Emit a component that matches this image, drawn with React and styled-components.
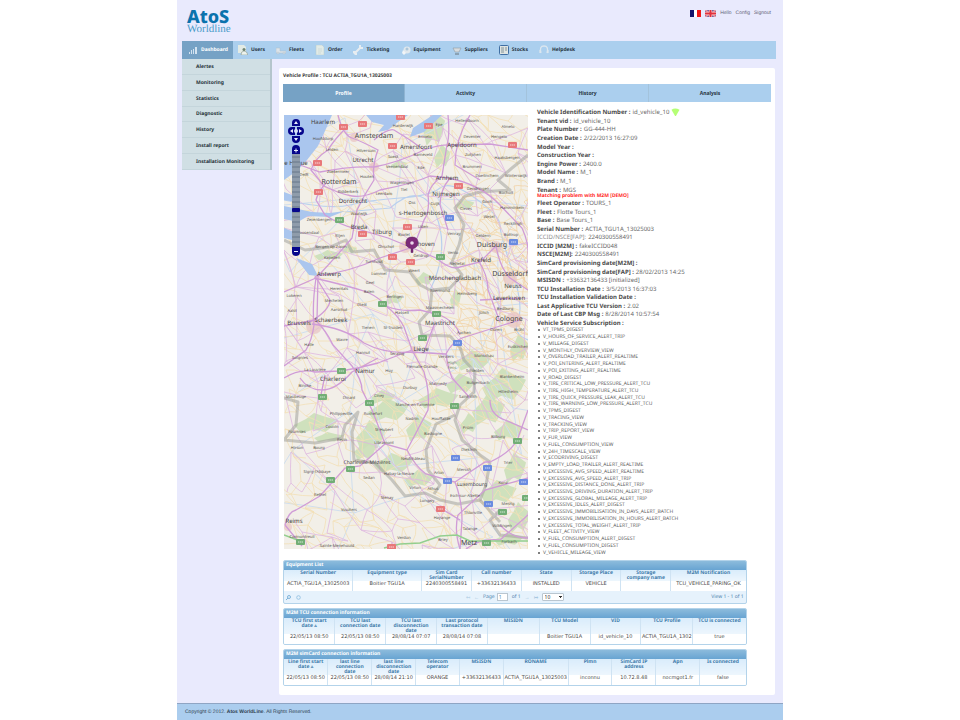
import React from 'react';
import styled, { createGlobalStyle } from 'styled-components';

const GlobalStyle = createGlobalStyle`
  *, *::before, *::after { box-sizing: border-box; }
  body {
    margin: 0;
    background: #ffffff;
    color: #4a4a4a;
    font-family: "Noto Sans", "Open Sans", sans-serif;
    font-size: 5px;
    line-height: 6px;
    text-rendering: geometricPrecision;
  }
  button, input, select { font: inherit; color: inherit; }
  a { color: inherit; text-decoration: none; }
  ul, dl, dd, p, h1, h2 { margin: 0; padding: 0; }
`;

const Page = styled.div`
  max-width: 606px;
  min-height: 100vh;
  margin: 0 auto;
  background: #e9eafd;
  display: flex;
  flex-direction: column;
`;

const Header = styled.header`
  height: 41px;
  padding: 8px 12px 0 10px;
  display: flex;
  justify-content: space-between;
  align-items: flex-start;
`;

const Logo = styled.a`
  display: grid;
  grid-template-rows: 16px 11px;
`;

const LogoName = styled.span`
  font-weight: 800;
  font-size: 18px;
  line-height: 18px;
  color: #0b72ad;
`;

const LogoSub = styled.span`
  font-family: "Liberation Serif", serif;
  font-size: 11px;
  line-height: 11px;
  color: #4b9cc9;
`;

const Tools = styled.div`
  display: flex;
  align-items: center;
  gap: 4px;
  height: 10px;
  svg { display: block; }
`;

const ToolLink = styled.a`
  font-family: "Liberation Sans", sans-serif;
  color: #66667a;
`;

const NavBar = styled.nav`
  margin: 0 7px 0 5px;
  height: 18px;
  background: #abcfee;
  display: flex;
`;

const NavItem = styled.a`
  display: flex;
  align-items: center;
  gap: 3px;
  padding: 0 ${(p) => (p.$active ? '5px' : '6px')} 0 ${(p) => (p.$active ? '6px' : '5px')};
  font-weight: 700;
  color: ${(p) => (p.$active ? '#ffffff' : '#26333f')};
  background: ${(p) => (p.$active ? '#76a2c5' : 'transparent')};
  svg { display: block; flex: none; }
`;

const Body = styled.div`
  flex: 1;
  display: flex;
  align-items: flex-start;
  gap: 7px;
  padding: 0 8px 8px 5px;
`;

const SideMenu = styled.nav`
  flex: 0 0 90px;
  min-height: 111px;
  display: grid;
  grid-auto-rows: 1fr;
  background: #d0dfe4;
  border-right: 2px solid #b4c5cc;
`;

const SideLink = styled.a`
  display: flex;
  align-items: center;
  padding: 1px 0 0 14px;
  font-weight: 700;
  color: #26333a;
  border-bottom: 1px solid #c4d5db;
`;

const Panel = styled.main`
  flex: 1;
  min-width: 0;
  margin-top: 9px;
  padding: 4px 4px 9px;
  background: #ffffff;
  border-radius: 2px;
`;

const PanelTitle = styled.h1`
  font-size: 5px;
  line-height: 9px;
  font-weight: 700;
  color: #3c3c3c;
`;

const Tabs = styled.div`
  margin-top: 3px;
  height: 18px;
  display: grid;
  grid-template-columns: repeat(4, 1fr);
`;

const Tab = styled.button`
  border: 0;
  border-right: 1px solid ${(p) => (p.$active ? '#8fb4d2' : '#a3c3dc')};
  padding: 0;
  font-weight: 700;
  background: ${(p) => (p.$active ? '#76a2c5' : '#abcfee')};
  color: ${(p) => (p.$active ? '#ffffff' : '#26333f')};
  &:last-child { border-right: 0; }
`;

const Columns = styled.div`
  display: grid;
  grid-template-columns: 244fr 234fr;
  gap: 9px;
  padding-left: 1px;
`;

const MapArea = styled.section`
  padding-top: 13px;
  svg { display: block; width: 100%; height: auto; }
`;

const Info = styled.section`
  padding-top: 6px;
`;

const Facts = styled.dl`
  display: grid;
  grid-auto-rows: 1fr;
  min-height: ${(p) => p.$height};
  font-size: 6px;
  line-height: 8px;
`;

const Fact = styled.div`
  display: flex;
  align-items: center;
  gap: 2px;
  white-space: nowrap;
  dt { font-weight: ${(p) => (p.$plain ? 400 : 700)}; color: ${(p) => (p.$plain ? '#8d8d8d' : '#4a4a4a')}; }
  dd { color: #686868; }
  svg { display: block; }
`;

const Warning = styled.p`
  height: 5px;
  line-height: 5px;
  font-weight: 700;
  color: #ff2a2a;
`;

const Services = styled.ul`
  min-height: 229px;
  display: grid;
  grid-auto-rows: 1fr;
  list-style: none;
  color: #5d5d5d;
`;

const Service = styled.li`
  display: flex;
  align-items: center;
  gap: 3px;
  padding-left: 1px;
  white-space: nowrap;
  &::before {
    content: '';
    width: 2px;
    height: 2px;
    border-radius: 1px;
    background: #555555;
  }
`;

const Grids = styled.div`
  width: 95%;
  margin-top: 4px;
  display: grid;
  gap: 4px;
`;

const GridBox = styled.section`
  border: 1px solid #b3d3ea;
  border-radius: 2px;
  overflow: hidden;
  background: #e6f2fc;
`;

const GridTitle = styled.h2`
  height: 9px;
  padding-left: 2px;
  font-size: 5px;
  line-height: 9px;
  font-weight: 700;
  color: #ffffff;
  background: linear-gradient(#8cbbdc, #68a4d2);
`;

const DataTable = styled.table`
  width: 100%;
  table-layout: fixed;
  border-collapse: collapse;
  th, td {
    text-align: center;
    vertical-align: top;
    border-right: 1px solid #cfe3f3;
  }
  th:last-child, td:last-child { border-right: 0; }
  th {
    height: ${(p) => p.$head};
    padding: 1px 3px 0;
    line-height: 5px;
    font-weight: 700;
    color: #3f7cab;
    background: linear-gradient(#d9ecfb, #edf6fd);
  }
  td {
    height: 10px;
    padding: 0;
    line-height: 6px;
    overflow: hidden;
    font-family: "DejaVu Sans", sans-serif;
    white-space: nowrap;
    color: #4a4a4a;
    background: #ffffff;
  }
`;

const Pager = styled.div`
  height: 12px;
  padding: 0 2px;
  display: grid;
  grid-template-columns: 1fr auto 1fr;
  align-items: center;
  color: #4f84ad;
`;

const PagerIcons = styled.div`
  display: flex;
  gap: 5px;
  svg { display: block; }
`;

const PagerMiddle = styled.div`
  display: flex;
  align-items: center;
  gap: 4px;
  white-space: nowrap;
`;

const PageInput = styled.input`
  width: 11px;
  height: 8px;
  padding: 0 1px;
  border: 1px solid #b9c6d0;
  background: #ffffff;
`;

const PageLabel = styled.label`
  display: flex;
  align-items: center;
  gap: 2px;
`;

const RowSelect = styled.select`
  appearance: none;
  width: 22px;
  height: 8px;
  padding: 0 2px;
  border: 1px solid #b9c6d0;
  border-radius: 1px;
  line-height: 6px;
  color: #333333;
  background:
    linear-gradient(#333333, #333333) 16px 2px / 3px 1px no-repeat,
    linear-gradient(#333333, #333333) 17px 3px / 1px 1px no-repeat,
    #ffffff;
`;

const PagerCount = styled.span`
  text-align: right;
`;

const PagerStep = styled.button`
  border: 0;
  padding: 0;
  background: none;
  color: #a9c8e0;
`;

const Footer = styled.footer`
  height: 17px;
  padding: 0 8px;
  border-top: 1px solid #8fa5c4;
  background: #abcdee;
  font-family: "Liberation Sans", sans-serif;
  line-height: 16px;
  color: #2f3f50;
`;

const NAV = [
  ['Dashboard', 'bars'], ['Users', 'users'], ['Fleets', 'truck'], ['Order', 'page'], ['Ticketing', 'tools'],
  ['Equipment', 'gear'], ['Suppliers', 'cart'], ['Stocks', 'stocks'], ['Helpdesk', 'headset'],
];

function NavIcon({ kind }) {
  const drawings = {
    bars: <g fill="#d3e3f0"><path d="M1 7h1v2H1zM3 5h1v4H3zM5 4h1v5H5zM7 2h2v7H7z" /></g>,
    users: <g><path d="M0 0h6l2 2v6H0z" fill="#e3ebe5" /><circle cx="6" cy="4.500" r="1.500" fill="#6e8272" /><path d="M3 10q0-4 3-4t4 4z" fill="#edf3ee" stroke="#71857a" strokeWidth=".5" /></g>,
    truck: <g fill="#dce4ea" stroke="#aebdc9" strokeWidth=".5"><path d="M0 3h4v3h6v2H0z" /><circle cx="2" cy="8" r="1" /><circle cx="8" cy="8" r="1" /></g>,
    page: <g><path d="M1 0h6l2 2v8H1z" fill="#e2ebe7" stroke="#b7c8cb" strokeWidth=".5" /><path d="M3 4h4M3 6h4M3 8h3" stroke="#c2d0d2" strokeWidth=".6" /></g>,
    tools: <path d="M1 9L5 5L8 2M7 0v3h3M0 7h3v3" stroke="#e7edf1" strokeWidth="2" fill="none" />,
    gear: <g><circle cx="6" cy="5" r="3.500" fill="#e0e8ed" /><circle cx="6" cy="4" r="1.500" fill="#abc6da" /><path d="M2 5l3 3-2 2-2-2z" fill="#f2f5f7" /></g>,
    cart: <g><path d="M1 3h8L7 7H3z" fill="#d7dcdf" stroke="#8f9aa3" strokeWidth=".6" /><path d="M3 9h4" stroke="#6b747b" /></g>,
    stocks: <g><rect x=".5" y=".5" width="9" height="9" rx="1" fill="#dfe4e2" stroke="#3f6ea3" /><path d="M2 3h3M2 5h3M2 7h3M6 3h2M6 5h2" stroke="#6a7d88" strokeWidth=".8" /></g>,
    headset: <path d="M2 8Q0 1 5 1t3 7M1 5v3M9 5v3" stroke="#dbe6ef" strokeWidth="1.300" fill="none" />,
  };
  return <svg width="10" height="10" viewBox="0 0 10 10" aria-hidden="true">{drawings[kind]}</svg>;
}

const FACTS_TOP = [
  ['Vehicle Identification Number :', 'id_vehicle_10', 'gem'], ['Tenant vid :', 'id_vehicle_10'],
  ['Plate Number :', 'GG-444-HH'], ['Creation Date :', '2/22/2013 16:27:09'], ['Model Year :', ''],
  ['Construction Year :', ''], ['Engine Power :', '2400.0'], ['Model Name :', 'M_1'], ['Brand :', 'M_1'], ['Tenant :', 'MGS'],
];

const FACTS_BOTTOM = [
  ['Fleet Operator :', 'TOURS_1'], ['Fleet :', 'Flotte Tours_1'], ['Base :', 'Base Tours_1'],
  ['Serial Number :', 'ACTIA_TGU1A_13025003'], ['ICCID/NSCE[FAP]:', '2240300558491', 'plain'],
  ['ICCID [M2M] :', 'fakeICCID048'], ['NSCE[M2M]:', '2240300558491'], ['SimCard provisioning date[M2M] :', ''],
  ['SimCard provisioning date[FAP] :', '28/02/2013 14:25'], ['MSISDN :', '+33632136433 [initialized]'],
  ['TCU Installation Date :', '3/5/2013 16:37:03'], ['TCU Installation Validation Date :', ''],
  ['Last Applicative TCU Version :', '2.02'], ['Date of Last CBP Msg :', '8/28/2014 10:57:54'],
  ['Vehicle Service Subscription :', ''],
];

const SERVICES = `VT_TPMS_DIGEST V_HOURS_OF_SERVICE_ALERT_TRIP V_MILEAGE_DIGEST V_MONTHLY_OVERVIEW_VIEW
V_OVERLOAD_TRAILER_ALERT_REALTIME V_POI_ENTERING_ALERT_REALTIME V_POI_EXITING_ALERT_REALTIME V_ROAD_DIGEST
V_TIRE_CRITICAL_LOW_PRESSURE_ALERT_TCU V_TIRE_HIGH_TEMPERATURE_ALERT_TCU V_TIRE_QUICK_PRESSURE_LEAK_ALERT_TCU
V_TIRE_WARNING_LOW_PRESSURE_ALERT_TCU V_TPMS_DIGEST V_TRACING_VIEW V_TRACKING_VIEW V_TRIP_REPORT_VIEW V_FUR_VIEW
V_FUEL_CONSUMPTION_VIEW V_24H_TIMESCALE_VIEW V_ECODRIVING_DIGEST V_EMPTY_LOAD_TRAILER_ALERT_REALTIME
V_EXCESSIVE_AVG_SPEED_ALERT_REALTIME V_EXCESSIVE_AVG_SPEED_ALERT_TRIP V_EXCESSIVE_DISTANCE_DONE_ALERT_TRIP
V_EXCESSIVE_DRIVING_DURATION_ALERT_TRIP V_EXCESSIVE_GLOBAL_MILEAGE_ALERT_TRIP V_EXCESSIVE_IDLES_ALERT_DIGEST
V_EXCESSIVE_IMMOBILISATION_IN_DAYS_ALERT_BATCH V_EXCESSIVE_IMMOBILISATION_IN_HOURS_ALERT_BATCH
V_EXCESSIVE_TOTAL_WEIGHT_ALERT_TRIP V_FLEET_ACTIVITY_VIEW V_FUEL_CONSUMPTION_ALERT_DIGEST
V_FUEL_CONSUMPTION_DIGEST V_VEHICLE_MILEAGE_VIEW`.split(/\s+/);

const EQUIPMENT = {
  title: 'Equipment List',
  head: '11px',
  widths: [69, 69, 50, 50, 50, 50, 50, 75],
  columns: ['Serial Number', 'Equipment type', 'Sim Card SerialNumber', 'Call number', 'State', 'Storage Place', 'Storage company\u00a0name', 'M2M Notification'],
  row: ['ACTIA_TGU1A_13025003', 'Boitier TGU1A', '2240300558491', '+33632136433', 'INSTALLED', 'VEHICLE', '', 'TCU_VEHICLE_PARING_OK'],
};
const TCU = {
  title: 'M2M TCU connection information',
  head: '16px',
  widths: [51, 51, 51, 51, 52, 51, 51, 52, 53],
  columns: ['TCU first start date\u00a0▵', 'TCU last connection\u00a0date', 'TCU last disconnection date', 'Last protocol transaction\u00a0date', 'MISIDN', 'TCU Model', 'VID', 'TCU Profile', 'TCU\u00a0is\u00a0connected'],
  row: ['22/05/13 08:50', '22/05/13 08:50', '28/08/14 07:07', '28/08/14 07:08', '', 'Boitier TGU1A', 'id_vehicle_10', 'ACTIA_TGU1A_1302', 'true'],
};
const SIM = {
  title: 'M2M simCard connection information',
  head: '16px',
  widths: [44, 44, 44, 44, 44, 65, 44, 44, 44, 46],
  columns: ['Line\u00a0first\u00a0start date\u00a0▵', 'last line connection date', 'last line disconnection date', 'Telecom operator', 'MSISDN', 'RONAME', 'Plmn', 'SimCard IP address', 'Apn', 'Is connected'],
  row: ['22/05/13 08:50', '22/05/13 08:50', '28/08/14 21:10', 'ORANGE', '+33632136433', 'ACTIA_TGU1A_13025003', 'inconnu', '10.72.8.48', 'nocmgot1.fr', 'false'],
};

function InfoGrid({ data, children }) {
  const total = data.widths.reduce((a, b) => a + b, 0);
  return (
    <GridBox>
      <GridTitle>{data.title}</GridTitle>
      <DataTable $head={data.head} aria-label={data.title}>
        <colgroup>{data.widths.map((w, i) => <col key={i} width={`${(w / total) * 100}%`} />)}</colgroup>
        <thead><tr>{data.columns.map((c) => <th key={c} scope="col">{c}</th>)}</tr></thead>
        <tbody><tr>{data.row.map((c, i) => <td key={i}>{c}</td>)}</tr></tbody>
      </DataTable>
      {children}
    </GridBox>
  );
}

const PLACES = [
  ['Amsterdam', 374, 138, 7], ['Rotterdam', 339, 184, 7], ['Brussels', 299, 325, 6], ['Duisburg', 492, 247, 7],
  ['Düsseldorf', 510, 276, 7], ['Cologne', 509, 321, 7], ['Utrecht', 363, 162, 6], ['Haarlem', 323, 124, 6],
  ['Amersfoort', 416, 149, 6], ['Apeldoorn', 462, 147, 6], ['e Hague', 296, 165, 6], ['Arnhem', 447, 180, 6],
  ['Nijmegen', 446, 196, 6], ['Dordrecht', 353, 203, 6], ['s-Hertogenbosch', 423, 215, 6], ['Breda', 359, 229, 6],
  ['Tilburg', 382, 234, 6], ['Eindhoven', 420, 246, 6], ['Antwerp', 329, 276, 6], ['Schaerbeek', 331, 322, 6],
  ['Mönchengladbach', 455, 280, 6], ['Krefeld', 481, 262, 6], ['Neuss', 513, 288, 6], ['Leverkusen', 509, 300, 6],
  ['Maastricht', 440, 325, 6], ['Liège', 421, 351, 6], ['Charleroi', 333, 381, 6], ['Namur', 365, 373, 6],
  ['Reims', 294, 523, 6], ['Metz', 469, 545, 7], ['Charleville-Mézières', 367, 464, 5], ['Luxembourg', 472, 486, 5],
  ['Hoofddorp', 323, 140], ['Harderwijk', 403, 127], ['Epe', 439, 126], ['Hellendoorn', 467, 122], ['Almelo', 508, 128],
  ['Ermelo', 425, 138], ['Deventer', 472, 138], ['Hengelo', 499, 138], ['Leiden', 332, 151], ['Hilversum', 366, 152],
  ['Soest', 393, 158], ['Barneveld', 423, 156], ['Zutphen', 473, 156], ['Haaksbergen', 507, 159], ['Zoetermeer', 338, 173],
  ['Veenendaal', 397, 168], ['Ede', 421, 169], ['Brummen', 472, 168], ['Delft', 304, 176], ['Houten', 367, 178],
  ['Wageningen', 402, 184], ['Doetinchem', 487, 177], ['Winterswijk', 516, 177], ['Ridderkerk', 348, 193], ['Leerdam', 384, 195],
  ['Tiel', 404, 191], ['Gendringen', 478, 190], ['Bocholt', 506, 194], ['Oss', 412, 204], ['Cuijk', 435, 205],
  ['Goch', 487, 203], ['Cleves', 466, 210], ['Waalwijk', 359, 215], ['Zevenbergen', 319, 221], ['Uden', 423, 228],
  ['Wesel', 489, 218], ['Hamminkeln', 512, 209], ['Roosendaal', 308, 234], ['Rijen', 340, 237], ['Boxtel', 404, 236],
  ['Bergen op Zoom', 331, 248], ['Geldern', 483, 237], ['Bottrop', 511, 236], ['Venray', 454, 235], ['Recklingh', 513, 225],
  ['Oirschot', 386, 248], ['Kapellen', 332, 259], ['Turnhout', 374, 263], ['Lommel', 379, 275], ['Geel', 370, 284],
  ['Herentals', 339, 290], ['Balen', 369, 293], ['Geldrop', 421, 257], ['Weert', 414, 272], ['Venlo', 453, 254],
  ['Nettetal', 457, 265], ['Mechelen', 334, 302], ['Beringen', 395, 298], ['Diest', 362, 306], ['Aarschot', 339, 311],
  ['Hasselt', 402, 314], ['Roermond', 440, 292], ['Heinsberg', 467, 295], ['Aalst', 292, 312], ['Lokeren', 294, 297],
  ['Maasmechelen', 440, 309], ['Jülich', 484, 314], ['Bedburg', 505, 310], ['Tienen', 368, 329], ['St-Truiden', 393, 329],
  ['Aachen', 464, 334], ['Düren', 496, 331], ['Brühl', 519, 331], ['Wavre', 342, 341], ['Halle', 309, 346],
  ['Hannut', 363, 354], ['Seraing', 397, 355], ['Verviers', 446, 358], ['Flémalle-Grande', 422, 368], ['Soignies', 300, 359],
  ['Huy', 389, 372], ['La Louvière', 315, 371], ['Monschau', 484, 357], ['Euskirchen', 518, 348], ['Schleiden', 475, 372],
  ['Blankenheim', 512, 378], ['Hillesheim', 508, 393], ['Malmedy', 438, 385], ['Butgenbach', 478, 384], ['Durbuy', 410, 389],
  ['Binche', 305, 387], ['Maubeuge', 296, 398], ['Ciney', 379, 397], ['Dinant', 349, 399], ['Saint-Vith', 468, 398],
  ['Marche-en-Famenne', 415, 406], ['Philippeville', 341, 415], ['Rochefort', 373, 415], ['Nadrin', 412, 420],
  ['Houffalize', 441, 420], ['St-Hubert', 384, 431], ['Bastogne', 433, 435], ['Libramont', 384, 444], ['Prüm', 468, 429],
  ['Bitburg', 498, 438], ['Fourmies', 297, 433], ['Couvin', 332, 428], ['Hirson', 297, 449], ['Bourg', 319, 449],
  ['Revin', 342, 441], ['Neufchâteau', 413, 460], ['Diekirch', 469, 451], ['Trier', 508, 464], ['Signy-l’Abbaye', 317, 473],
  ['Sedan', 369, 479], ['Habay-la-Neuve', 399, 475], ['Arlon', 439, 474], ['Mersch', 464, 471], ['Virton', 415, 489],
  ['Athus', 433, 490], ['Konz', 503, 484], ['Rethel', 320, 496], ['Stenay', 387, 499], ['Longwy', 427, 502],
  ['Esch-sur-Alzette', 465, 497], ['Vouziers', 349, 511], ['Merzig', 508, 505], ['Thionville', 473, 514],
  ['Hayange', 442, 519], ['Völklingen', 502, 527], ['Talange', 470, 530], ['Briey', 443, 541], ['Verdun', 404, 539],
  ['Cormontreuil', 302, 538], ['Forbach', 509, 543], ['Sainte-Menehould', 337, 547],
];

const SHIELDS = [
  ['r', 343, 127], ['r', 362, 124], ['r', 400, 117], ['r', 428, 126], ['r', 392, 146], ['r', 317, 163], ['r', 512, 145],
  ['r', 458, 186], ['r', 318, 192], ['g', 339, 220], ['r', 407, 227], ['r', 362, 234], ['b', 449, 218], ['b', 513, 242],
  ['r', 392, 257], ['r', 410, 262], ['g', 440, 257], ['g', 382, 304], ['g', 436, 314], ['g', 422, 338], ['b', 457, 343],
  ['g', 341, 371], ['g', 322, 397], ['g', 369, 403], ['g', 454, 406], ['g', 517, 441], ['b', 455, 458], ['g', 350, 469],
  ['b', 487, 468], ['g', 330, 480], ['b', 447, 481], ['b', 523, 482], ['g', 526, 498], ['b', 488, 504], ['r', 440, 509],
  ['g', 502, 512], ['g', 300, 542], ['r', 391, 547], ['g', 486, 543],
];
const SHIELD_COLORS = { r: '#e8787a', g: '#72ae76', b: '#6a8be0' };

const HIGHWAYS = [
  'M338 115Q343 135 352 138T378 150Q372 165 374 180Q364 195 357 210L352 238Q335 258 318 276L317 320',
  'M344 130Q334 140 328 150Q315 158 311 170L324 186Q340 194 352 196T380 190Q412 184 430 176L448 178Q480 184 500 205L522 228Q530 245 528 262',
  'M326 183Q318 192 316 200L325 215Q342 226 354 228L388 238L410 247L436 258Q448 268 456 268L480 262L496 246',
  'M300 165L320 172Q350 166 374 167Q400 162 424 150Q440 144 454 145L490 144L528 150',
  'M374 140Q388 128 394 130L410 140L424 150M448 115Q450 135 447 145L442 176Q430 185 428 195Q430 212 424 220L414 246',
  'M314 278Q345 285 367 292Q380 298 386 306Q398 315 404 327L412 350L424 372Q430 392 428 410L407 450',
  'M312 324Q345 328 364 343Q385 354 410 352L446 354Q452 342 462 338L500 326L520 320',
  'M284 326L315 320Q326 330 333 345L352 366Q362 380 362 390L372 410Q380 430 385 444L407 450Q415 466 426 474L455 482Q462 500 462 520L460 549',
  'M316 276Q350 272 380 258L410 248M284 292L316 278Q312 305 314 325Q312 340 306 350L284 366M310 322Q330 310 330 300L315 276',
  'M386 306Q400 312 420 310L440 315Q456 322 460 335M434 325L424 352M478 260Q488 275 488 290L500 322M496 246Q500 268 510 278L528 290M480 300L520 298',
  'M284 378Q300 368 315 372L341 371Q360 368 378 363L412 350M325 375L320 400M300 378Q308 390 322 390T352 372L378 358',
  'M446 354Q448 368 452 378L470 398M490 400Q490 415 505 420L528 430M470 115Q455 140 455 165L480 180M450 178Q440 190 440 205L448 230',
  'M320 496Q336 478 345 468L360 466L385 444M285 525Q288 512 296 510L320 496M285 525L302 546M490 462Q512 452 518 438L528 410M455 482L485 462L490 462',
  'M460 549Q454 530 458 515L485 490L528 478M442 509L460 520M500 525Q512 538 528 538M466 549Q480 538 500 540L528 515',
];

const BORDERS = [
  'M528 155L512 168L498 180L510 190L480 192L465 196L455 208L464 225L459 245L452 262L462 275L450 288L432 290L430 310L419 322L422 335L450 336L460 347L464 360L475 372L474 392L460 405L455 420L462 440L480 455L490 462',
  'M284 240L305 250L330 247L346 240L352 252L374 250L385 270L410 272L420 285L430 290',
  'M284 398L298 402L296 425L284 440L315 443L342 438L345 425L358 412L352 432L354 460L375 463L392 480L405 496L425 493L440 500L458 504L480 500L486 485L490 462',
  'M455 415L436 424L426 450L428 470L440 485L434 494M500 510L490 520L500 535L528 538M480 500L500 522',
];

const FORESTS = [
  [435, 130, 12, 22], [443, 158, 9, 14], [400, 165, 9, 5], [466, 205, 10, 6], [330, 256, 16, 6], [350, 250, 8, 5],
  [425, 280, 10, 8], [456, 300, 6, 12], [395, 300, 9, 6], [475, 362, 20, 12], [506, 388, 24, 20], [462, 385, 16, 12],
  [440, 400, 22, 12], [390, 412, 22, 14], [420, 430, 14, 16], [372, 438, 16, 18], [395, 465, 22, 12], [420, 480, 16, 10],
  [366, 452, 12, 12], [318, 425, 24, 12], [330, 438, 16, 6], [490, 412, 18, 18], [510, 432, 16, 12], [470, 425, 10, 12],
  [500, 494, 20, 14], [516, 470, 12, 18], [520, 520, 12, 18], [510, 540, 16, 8], [384, 398, 14, 8], [520, 350, 10, 16],
];

function makeRoads(seed, step, left, top, right, bottom) {
  let s = seed;
  const rand = () => {
    s = (s * 16807) % 2147483647;
    return s / 2147483647;
  };
  const nodes = [];
  for (let y = top; y <= bottom + step; y += step) {
    const line = [];
    for (let x = left; x <= right + step; x += step) {
      line.push([Math.round(x + (rand() - 0.5) * step), Math.round(y + (rand() - 0.5) * step)]);
    }
    nodes.push(line);
  }
  let d = '';
  nodes.forEach((line, r) => line.forEach(([x, y], c) => {
    [[0, 1], [1, 0], [1, 1]].forEach(([dr, dc]) => {
      const next = nodes[r + dr] && nodes[r + dr][c + dc];
      if (next && rand() > 0.42) {
        const mx = Math.round((x + next[0]) / 2 + (rand() - 0.5) * 6);
        const my = Math.round((y + next[1]) / 2 + (rand() - 0.5) * 6);
        d += `M${x} ${y}Q${mx} ${my} ${next[0]} ${next[1]}`;
      }
    });
  }));
  return d;
}

const LANES = makeRoads(73, 13, 284, 115, 528, 549);
const LANES_DENSE = makeRoads(31, 10, 460, 190, 528, 350);
const LOCAL = makeRoads(991, 24, 284, 115, 528, 549);
const STREAMS = makeRoads(4241, 60, 284, 140, 528, 549);

function RouteMap() {
  return (
    <svg viewBox="284 115 244 434" role="img" aria-label="Map" fontFamily="Noto Sans, sans-serif">
      <rect x="284" y="115" width="244" height="434" fill="#f2efe8" />
      {FORESTS.map(([x, y, a, b], i) => (
        <path key={i} fill="#cbdfb8" opacity=".9" d={`M${x - a} ${y}l${a / 2}-${b / 2} ${a / 3}-${b / 2} ${a / 2} ${b / 3} ${a / 2} ${b / 4}-${a / 5} ${b / 2}-${a / 3} ${b / 2}-${a / 2}-${b / 5}-${a / 2} ${b / 3}z`} />
      ))}
      <path d={STREAMS} fill="none" stroke="#cfdeee" strokeWidth="1" />
      <path d="M284 200Q330 210 350 205T400 198T440 188T475 198T500 225T512 270T518 320T528 340M430 290Q450 250 436 215T390 208L345 212" fill="none" stroke="#b9d0ee" strokeWidth="1.200" />
      <path d={LANES} fill="none" stroke="#f3dfb6" strokeWidth=".8" />
      <path d={LANES_DENSE} fill="none" stroke="#f1d2a6" strokeWidth=".8" />
      <path d={LOCAL} fill="none" stroke="#deb8e0" strokeWidth=".8" />
      <g fill="#aac6ee">
        <path d="M284 115H332L325 131L318 146L307 160L298 170L284 180Z" />
        <path d="M366 115H408L398 122L388 130L378 132L384 125L372 122Z M413 128L433 115H442L424 132L410 137Z" />
        <path d="M284 192L300 198L296 202L284 200ZM284 206L312 212L330 213L345 211L330 217L308 216L298 222L284 219ZM284 228L294 232L300 242L284 238ZM296 258L312 264L318 276L309 275L302 266Z" />
      </g>
      <g fill="#e9c4c2" opacity=".7">
        <circle cx="314" cy="326" r="8" /><circle cx="510" cy="278" r="7" /><circle cx="514" cy="320" r="8" />
        <circle cx="405" cy="247" r="6" /><circle cx="374" cy="167" r="5" /><circle cx="496" cy="247" r="6" />
        <circle cx="414" cy="350" r="4" /><circle cx="354" cy="138" r="4" /><circle cx="288" cy="527" r="4" />
      </g>
      {BORDERS.map((d) => <path key={d} d={d} fill="none" stroke="#a3a39d" strokeWidth="3" strokeLinejoin="round" opacity=".55" />)}
      {HIGHWAYS.map((d) => <path key={d} d={d} fill="none" stroke="#d09cd7" strokeWidth="1.300" />)}
      <path d="M384 548L400 544L420 543L440 536L457 535L470 541L528 541M284 535L300 541" fill="none" stroke="#93cf8f" strokeWidth="1.500" />
      {SHIELDS.map(([c, x, y]) => (
        <g key={`${x}-${y}`}>
          <rect x={x - 4} y={y - 3} width="9" height="6" rx="1" fill={SHIELD_COLORS[c]} />
          <path d={`M${x - 2} ${y}h5`} stroke="#ffffff" strokeWidth="1" strokeDasharray="1.500 .5" opacity=".7" />
        </g>
      ))}
      {PLACES.map(([name, x, y, size]) => (
        <text key={name} x={x} y={y} textAnchor="middle" fontSize={size || 4} fill={size ? '#444444' : '#55534f'}>{name}</text>
      ))}
      <text x="452" y="364" textAnchor="middle" fontSize="4" fill="#6d8a63">High</text>
      <text x="452" y="369" textAnchor="middle" fontSize="4" fill="#6d8a63">Fens</text>
      <g>
        <rect x="292" y="153" width="8" height="96" fill="#8f9cab" />
        <path d="M292 157h8M292 162h8M292 167h8M292 172h8M292 177h8M292 182h8M292 187h8M292 192h8M292 197h8M292 202h8M292 207h8M292 212h8M292 217h8M292 222h8M292 227h8M292 232h8M292 237h8M292 242h8" stroke="#66768a" strokeWidth="1" />
        <g fill="#06068c">
          <path d="M292 126v-3q0-4 4-4t4 4v3zM292 136v3q0 4 4 4t4-4v-3zM295 127v8h-3q-4 0-4-4t4-4zM297 127v8h3q4 0 4-4t-4-4z" />
          <path d="M292 154v-5q0-4 4-4t4 4v5zM292 247v5q0 4 4 4t4-4v-5z" />
          <rect x="292" y="208" width="8" height="4" rx="1" />
        </g>
        <path d="M294 124l2-3 2 3zM294 138l2 3 2-3zM293 129l-3 2 3 2zM299 129l3 2-3 2zM294 150h4v1h-4zM295.500 148.500h1v4h-1zM294 251h4v1h-4z" fill="#e9eefc" />
        <circle cx="296" cy="131" r="2" fill="#d9e3f7" />
      </g>
      <path d="M412 237q6 0 6 5.500q0 5-5 6v4h-2v-4q-5-1-5-6q0-5.500 6-5.500z" fill="#7d2a78" stroke="#5b1d5a" strokeWidth=".5" />
      <circle cx="412" cy="243" r="1.800" fill="#ead7ea" />
    </svg>
  );
}

function FactRows({ rows, height }) {
  return (
    <Facts $height={height}>
      {rows.map(([label, value, kind]) => (
        <Fact key={label} $plain={kind === 'plain'}>
          <dt>{label}</dt>
          <dd>{value}</dd>
          {kind === 'gem' && (
            <svg width="9" height="8" viewBox="0 0 9 9" aria-hidden="true">
              <path d="M0 2Q4-1 9 2L5 9H4Z" fill="#b5ff75" />
            </svg>
          )}
        </Fact>
      ))}
    </Facts>
  );
}

export default function App() {
  return (
    <>
      <GlobalStyle />
      <Page>
        <Header>
          <Logo href="#home">
            <LogoName>AtoS</LogoName>
            <LogoSub>Worldline</LogoSub>
          </Logo>
          <Tools>
            <svg width="11" height="7" viewBox="0 0 11 7" role="img" aria-label="Français">
              <path d="M0 0h4v7H0z" fill="#14146c" /><path d="M4 0h3v7H4z" fill="#ffffff" /><path d="M7 0h4v7H7z" fill="#f01818" />
            </svg>
            <svg width="11" height="7" viewBox="0 0 11 7" role="img" aria-label="English">
              <path d="M0 0h11v7H0z" fill="#6b6ba6" />
              <path d="M0 0l11 7M11 0L0 7" stroke="#ee9aa2" strokeWidth="1.500" />
              <path d="M5.500 0v7M0 3.500h11" stroke="#f7dede" strokeWidth="3" />
              <path d="M5.500 0v7M0 3.500h11" stroke="#e2303c" strokeWidth="2" />
            </svg>
            <ToolLink href="#hello">Hello</ToolLink>
            <ToolLink href="#config">Config</ToolLink>
            <ToolLink href="#signout">Signout</ToolLink>
          </Tools>
        </Header>
        <NavBar>
          {NAV.map(([label, icon], i) => (
            <NavItem key={label} href={`#${icon}`} $active={i === 0}>
              <NavIcon kind={icon} />
              {label}
            </NavItem>
          ))}
        </NavBar>
        <Body>
          <SideMenu>
            {['Alertes', 'Monitoring', 'Statistics', 'Diagnostic', 'History', 'Install report', 'Installation Monitoring'].map((t) => (
              <SideLink key={t} href="#menu">{t}</SideLink>
            ))}
          </SideMenu>
          <Panel>
            <PanelTitle>Vehicle Profile : TCU ACTIA_TGU1A_13025003</PanelTitle>
            <Tabs>
              {['Profile', 'Activity', 'History', 'Analysis'].map((t, i) => (
                <Tab key={t} type="button" $active={i === 0}>{t}</Tab>
              ))}
            </Tabs>
            <Columns>
              <MapArea><RouteMap /></MapArea>
              <Info>
                <FactRows rows={FACTS_TOP} height="86px" />
                <Warning>Matching problem with M2M [DEMO]</Warning>
                <FactRows rows={FACTS_BOTTOM} height="128px" />
                <Services>{SERVICES.map((s) => <Service key={s}>{s}</Service>)}</Services>
              </Info>
            </Columns>
            <Grids>
              <InfoGrid data={EQUIPMENT}>
                <Pager>
                  <PagerIcons>
                    <svg width="5" height="5" viewBox="0 0 5 5" aria-hidden="true"><circle cx="3" cy="2" r="1.500" fill="none" stroke="#7fb4da" /><path d="M2 3L0 5" stroke="#7fb4da" /></svg>
                    <svg width="5" height="5" viewBox="0 0 5 5" aria-hidden="true"><circle cx="2.500" cy="2.500" r="1.800" fill="none" stroke="#9cc6e4" /></svg>
                  </PagerIcons>
                  <PagerMiddle>
                    <PagerStep type="button" aria-label="First page">↤</PagerStep>
                    <PagerStep type="button" aria-label="Previous page">←</PagerStep>
                    <PageLabel>Page<PageInput type="text" defaultValue="1" /></PageLabel>
                    <span>of 1</span>
                    <PagerStep type="button" aria-label="Next page">→</PagerStep>
                    <PagerStep type="button" aria-label="Last page">↦</PagerStep>
                    <RowSelect aria-label="Rows per page" defaultValue="10"><option>10</option><option>20</option></RowSelect>
                  </PagerMiddle>
                  <PagerCount>View 1 - 1 of 1</PagerCount>
                </Pager>
              </InfoGrid>
              <InfoGrid data={TCU} />
              <InfoGrid data={SIM} />
            </Grids>
          </Panel>
        </Body>
        <Footer>Copyright © 2012. <strong>Atos WorldLine</strong>. All Rights Reserved.</Footer>
      </Page>
    </>
  );
}
